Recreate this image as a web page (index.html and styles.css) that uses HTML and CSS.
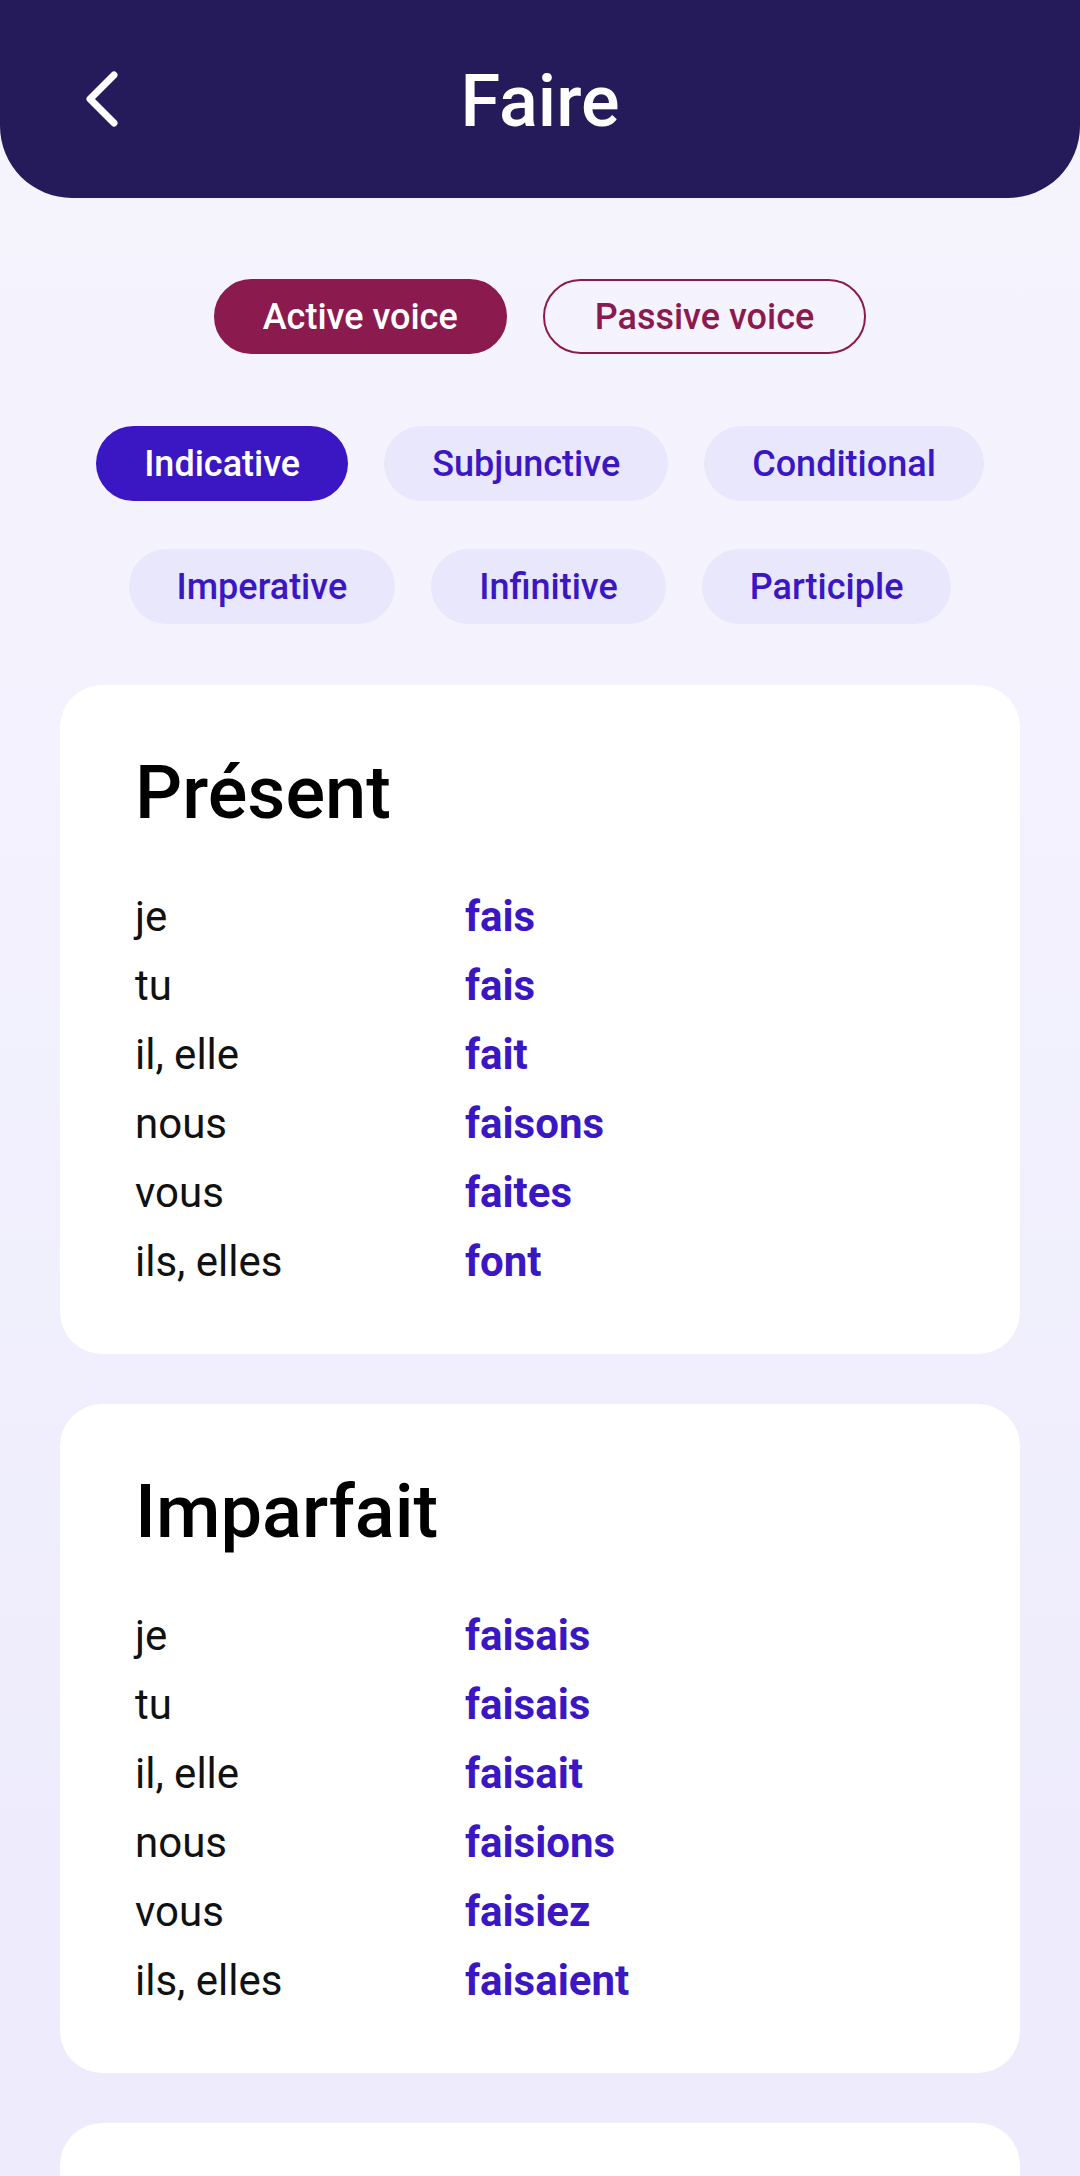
FILE: index.html
```html
<!DOCTYPE html>
<html>
<head>
  <title>Faire</title>
  <link rel="stylesheet" href="styles.css">
</head>
<body>
  <header class="topbar">
    <button class="back" aria-label="Back">
      <svg width="40" height="60" viewBox="0 0 40 60">
        <path d="M30 6 L6 30 L30 54" fill="none" stroke="#fff" stroke-width="7" stroke-linecap="round" stroke-linejoin="round"/>
      </svg>
    </button>
    <h1>Faire</h1>
  </header>

  <div class="voices">
    <button class="voice active">Active voice</button>
    <button class="voice">Passive voice</button>
  </div>

  <div class="moods">
    <div class="mood-row">
      <button class="mood active">Indicative</button>
      <button class="mood">Subjunctive</button>
      <button class="mood">Conditional</button>
    </div>
    <div class="mood-row">
      <button class="mood">Imperative</button>
      <button class="mood">Infinitive</button>
      <button class="mood">Participle</button>
    </div>
  </div>

  <main class="tenses">
    <section class="card">
      <h2>Présent</h2>
      <div class="row"><span class="pron">je</span><span class="form">fais</span></div>
      <div class="row"><span class="pron">tu</span><span class="form">fais</span></div>
      <div class="row"><span class="pron">il, elle</span><span class="form">fait</span></div>
      <div class="row"><span class="pron">nous</span><span class="form">faisons</span></div>
      <div class="row"><span class="pron">vous</span><span class="form">faites</span></div>
      <div class="row"><span class="pron">ils, elles</span><span class="form">font</span></div>
    </section>

    <section class="card">
      <h2>Imparfait</h2>
      <div class="row"><span class="pron">je</span><span class="form">faisais</span></div>
      <div class="row"><span class="pron">tu</span><span class="form">faisais</span></div>
      <div class="row"><span class="pron">il, elle</span><span class="form">faisait</span></div>
      <div class="row"><span class="pron">nous</span><span class="form">faisions</span></div>
      <div class="row"><span class="pron">vous</span><span class="form">faisiez</span></div>
      <div class="row"><span class="pron">ils, elles</span><span class="form">faisaient</span></div>
    </section>

    <!-- next tense card, scrolled below the fold -->
    <section class="card card-next"></section>
  </main>
</body>
</html>
```

FILE: styles.css
```css
:root {
  --header: #251a5a;
  --maroon: #8b1a4e;
  --violet: #3b17c4;
  --chip: #e8e7fb;
}

html, body {
  height: 100%;
}

body {
  margin: 0;
  font-family: Roboto, "Noto Sans", sans-serif;
  background: linear-gradient(to bottom, #f6f5fe, #edebfc);
  overflow: hidden;
}

button {
  font-family: inherit;
  cursor: pointer;
}

.topbar {
  background: var(--header);
  height: 198px;
  border-radius: 0 0 72px 72px;
  display: flex;
  align-items: center;
  justify-content: center;
  position: relative;
}

.topbar h1 {
  margin: 0;
  color: white;
  font-size: 72px;
  font-weight: 500;
  line-height: 1;
  transform: translateY(3px);
}

.back {
  position: absolute;
  left: 84px;
  top: 69px;
  background: none;
  border: none;
  padding: 0;
  width: 40px;
  height: 60px;
}

.voices {
  display: flex;
  justify-content: center;
  gap: 36px;
  margin-top: 81px;
}

.voice {
  height: 75px;
  padding: 0 50px;
  border-radius: 38px;
  font-size: 36px;
  font-weight: 500;
  border: 2.5px solid var(--maroon);
  background: transparent;
  color: var(--maroon);
}

.voice.active {
  background: var(--maroon);
  color: white;
  padding: 0 47px;
}

.moods {
  display: flex;
  flex-direction: column;
  gap: 48px;
  margin-top: 72px;
}

.mood-row {
  display: flex;
  justify-content: center;
  gap: 36px;
}

.mood {
  height: 75px;
  padding: 0 48px;
  border-radius: 38px;
  border: none;
  font-size: 36px;
  font-weight: 500;
  background: var(--chip);
  color: var(--violet);
}

.mood.active {
  background: var(--violet);
  color: white;
}

.tenses {
  display: flex;
  flex-direction: column;
  gap: 50px;
  margin: 61px 60px 0;
}

.card {
  background: white;
  border-radius: 42px;
  padding: 65px 75px 58px;
}

.card-next {
  min-height: 200px;
}

.card h2 {
  margin: 0 0 47px;
  font-size: 74px;
  font-weight: 500;
  line-height: 85px;
  color: #000;
}

.row {
  display: flex;
  font-size: 42px;
  line-height: 69px;
}

.pron {
  width: 330px;
  color: #111;
}

.form {
  color: var(--violet);
  font-weight: 700;
}
```
